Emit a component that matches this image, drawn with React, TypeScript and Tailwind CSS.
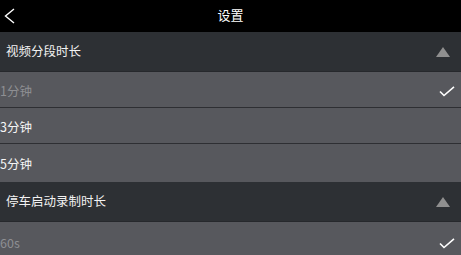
import React from "react";

const font = { fontFamily: '"Noto Sans CJK SC", "Noto Sans", sans-serif' };

function Triangle() {
  return (
    <svg width="14" height="10" viewBox="0 0 14 10" className="block">
      <polygon points="7,0 14,10 0,10" fill="#8f8f8f" />
    </svg>
  );
}

function Check() {
  return (
    <svg width="16" height="11" viewBox="0 0 16 11" className="block">
      <polyline points="1,5.5 5,9.5 15,0.8" fill="none" stroke="#ffffff" strokeWidth="1.6" />
    </svg>
  );
}

function Section({ title }: { title: string }) {
  return (
    <div className="h-[40px] shrink-0 bg-[#2d3034] border-b border-[#26282c] flex items-center justify-between pl-[6px] pr-[11px]">
      <span className="text-[12.5px] text-[#f2f2f2]">{title}</span>
      <Triangle />
    </div>
  );
}

function Row({ label, selected, h, border }: { label: string; selected?: boolean; h: string; border?: boolean }) {
  return (
    <div
      className={
        "shrink-0 bg-[#57585d] flex items-center justify-between pr-[6px] pt-[3px] " +
        h +
        (border ? " border-b border-[#2e2f33]" : "")
      }
    >
      <span className={"text-[12.5px] " + (selected ? "text-[#8e8f93]" : "text-[#f5f5f5]")}>{label}</span>
      {selected ? <Check /> : null}
    </div>
  );
}

export default function App() {
  return (
    <div className="w-[461px] h-[255px] overflow-hidden bg-[#57585d] flex flex-col" style={font}>
      <div className="h-[32px] shrink-0 bg-black grid grid-cols-[1fr_auto_1fr] items-center">
        <div className="pl-[4px] flex items-center">
          <svg width="11" height="16" viewBox="0 0 11 16" className="block">
            <polyline points="10,1 1.5,8 10,15" fill="none" stroke="#ffffff" strokeWidth="1.4" />
          </svg>
        </div>
        <span className="text-[13px] text-white pb-[3px]">设置</span>
        <div />
      </div>
      <Section title="视频分段时长" />
      <Row label="1分钟" selected h="h-[36px]" border />
      <Row label="3分钟" h="h-[36px]" border />
      <Row label="5分钟" h="h-[38px]" />
      <Section title="停车启动录制时长" />
      <Row label="60s" selected h="h-[40px]" />
    </div>
  );
}
